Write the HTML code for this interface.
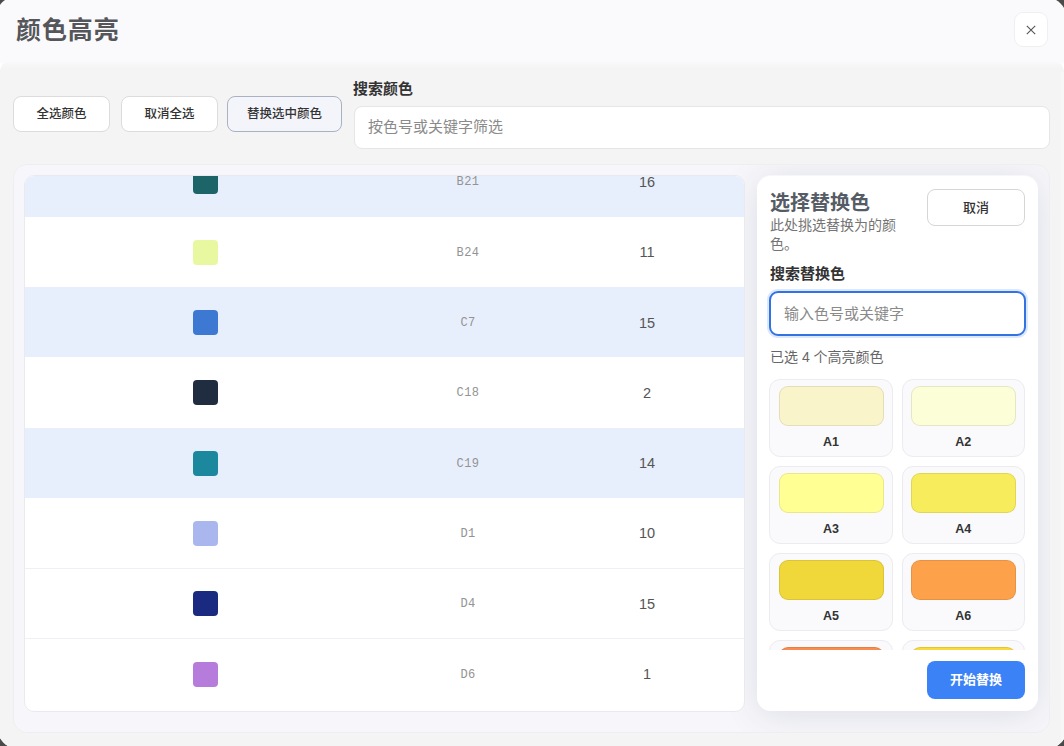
<!DOCTYPE html>
<html lang="zh-CN">
<head>
<meta charset="utf-8">
<title>颜色高亮</title>
<style>
*{box-sizing:border-box;margin:0;padding:0}
html,body{width:1064px;height:746px;overflow:hidden;background:#4a4a4a}
body{font-family:"Liberation Sans","Noto Sans CJK SC",sans-serif;position:relative;color:#333}
.win{position:absolute;left:-3px;top:-3px;width:1070px;height:752px;border-radius:18px 22px 21px 22px;background:#fafafc;overflow:hidden}
.inner{position:absolute;left:3px;top:3px;width:1064px;height:746px}
.title{position:absolute;left:16px;top:11px;font-size:25px;font-weight:700;color:#55565a;line-height:38px;letter-spacing:.9px}
.close{position:absolute;left:1014px;top:12px;width:34px;height:35px;border-radius:9px;background:#fff;border:1px solid #efeff1}
.close svg{position:absolute;left:10.9px;top:12px}
.bw{position:absolute;top:62px;width:12px;height:12px;background:linear-gradient(#fafafc,#fff 3px)}
.body{position:absolute;left:0;top:61px;width:1064px;height:700px;background:linear-gradient(#fafafc,#f7f7f9 3px,#f4f4f4 9px,#f4f4f4);border-radius:10px 10px 0 0}
.rstrip{position:absolute;left:1061px;top:72px;width:3px;height:680px;background:#f7f7f7}
.btn{position:absolute;top:96px;height:36px;border-radius:8px;background:#fff;border:1px solid #dcdcdc;font-size:12.5px;font-weight:500;color:#333;text-align:center;line-height:34px}
.btn.act{background:#f3f5fb;border-color:#a9b1c2}
.lbl{position:absolute;left:353px;top:78px;font-size:15px;font-weight:700;color:#333;line-height:22px}
.search{position:absolute;left:354px;top:106px;width:695.5px;height:42.5px;border-radius:8px;background:#fff;border:1px solid #e6e6e6;font-size:15px;color:#8a8a8a;line-height:40px;padding-left:13px}
.card{position:absolute;left:13px;top:164px;width:1037px;height:569px;border-radius:14px;background:#f7f7fb;border:1px solid #ededf3;overflow:hidden}
.pshadow{position:absolute;left:743px;top:10px;width:281px;height:536px;border-radius:14px;box-shadow:0 4px 36px rgba(20,28,50,.115)}
.table{position:absolute;left:24px;top:175px;width:721px;height:537px;border-radius:10px;background:#fff;border:1px solid #e9e9f0;overflow:hidden}
.row{position:absolute;left:0;width:721px;height:70.3px;box-shadow:0 1px 0 #eff0f6}
.row.sel{background:#e8effc;box-shadow:none}
.sw{position:absolute;left:168px;top:23px;width:25px;height:25px;border-radius:4px}
.code{position:absolute;left:393px;width:100px;top:28px;text-align:center;font-family:"Liberation Mono",monospace;font-size:12px;letter-spacing:.4px;color:#939393;line-height:16px}
.cnt{position:absolute;left:572px;width:100px;top:25.5px;text-align:center;font-size:14.5px;color:#555;line-height:20px}
.pin{position:absolute;left:.5px;top:-.7px;width:281px;height:536px}
.panel{position:absolute;left:756.5px;top:175.7px;width:281.5px;height:535.3px;border-radius:14px;background:#fff}
.ptitle{position:absolute;left:13px;top:14px;font-size:20px;font-weight:700;color:#565c66;line-height:28px}
.psub{position:absolute;left:13px;top:41px;width:140px;font-size:14px;color:#747474;line-height:18.5px}
.cancel{position:absolute;left:170px;top:13.5px;width:98px;height:37px;border-radius:8px;background:#fff;border:1px solid #d6d6d6;font-size:13px;font-weight:500;color:#333;text-align:center;line-height:35px}
.plbl{position:absolute;left:13px;top:88px;font-size:15px;font-weight:700;color:#333;line-height:22px}
.pinput{position:absolute;left:12px;top:116px;width:257px;height:45px;border-radius:9px;background:#fff;border:2px solid #3373df;box-shadow:0 0 0 2px rgba(59,130,246,.18);font-size:15px;color:#8a8a8a;line-height:41px;padding-left:13px}
.pcount{position:absolute;left:13px;top:172px;font-size:14px;color:#666;line-height:20px}
.grid{position:absolute;left:12px;top:204px;width:257px;height:271px;overflow:hidden}
.sc{position:absolute;width:124px;height:78px;border-radius:11px;background:#fafafc;border:1px solid #ececf0}
.sc i{position:absolute;left:9px;top:6px;width:105px;height:40px;border-radius:9px;border:1px solid rgba(0,0,0,.09)}
.sc.r i{left:8px}
.sc b{position:absolute;left:0;width:100%;top:52.5px;text-align:center;font-size:12.5px;font-weight:700;color:#333;line-height:18px}
.go{position:absolute;left:170px;top:486px;width:98px;height:37.5px;border-radius:8px;background:#3b82f6;font-size:13px;font-weight:700;color:#fff;text-align:center;line-height:37px}
</style>
</head>
<body>
<div class="win"><div class="inner">
  <div class="title">颜色高亮</div>
  <div class="close"><svg width="10" height="10" viewBox="0 0 10 10"><path d="M.8 .8L9.2 9.2M9.2 .8L.8 9.2" stroke="#555" stroke-width="1.1" fill="none"/></svg></div>
  <div class="bw" style="left:0"></div><div class="bw" style="left:1052px"></div><div class="body"></div><div class="rstrip"></div>
  <div class="btn" style="left:13px;width:97px">全选颜色</div>
  <div class="btn" style="left:121px;width:97px">取消全选</div>
  <div class="btn act" style="left:227px;width:115px">替换选中颜色</div>
  <div class="lbl">搜索颜色</div>
  <div class="search">按色号或关键字筛选</div>
  <div class="card"><div class="pshadow"></div></div>
  <div class="table">
    <div class="row sel" style="top:-29.6px"><span class="sw" style="background:#1d6468"></span><span class="code">B21</span><span class="cnt">16</span></div>
    <div class="row" style="top:40.7px"><span class="sw" style="background:#e8f8a0"></span><span class="code">B24</span><span class="cnt">11</span></div>
    <div class="row sel" style="top:111.0px"><span class="sw" style="background:#3d78d2"></span><span class="code">C7</span><span class="cnt">15</span></div>
    <div class="row" style="top:181.3px"><span class="sw" style="background:#202d40"></span><span class="code">C18</span><span class="cnt">2</span></div>
    <div class="row sel" style="top:251.6px"><span class="sw" style="background:#1b889e"></span><span class="code">C19</span><span class="cnt">14</span></div>
    <div class="row" style="top:321.9px"><span class="sw" style="background:#aab6ee"></span><span class="code">D1</span><span class="cnt">10</span></div>
    <div class="row" style="top:392.2px"><span class="sw" style="background:#1a2a80"></span><span class="code">D4</span><span class="cnt">15</span></div>
    <div class="row" style="top:462.5px;box-shadow:none"><span class="sw" style="background:#b57cdc"></span><span class="code">D6</span><span class="cnt">1</span></div>
  </div>
  <div class="panel"><div class="pin">
    <div class="ptitle">选择替换色</div>
    <div class="psub">此处挑选替换为的颜色。</div>
    <div class="cancel">取消</div>
    <div class="plbl">搜索替换色</div>
    <div class="pinput">输入色号或关键字</div>
    <div class="pcount">已选 4 个高亮颜色</div>
    <div class="grid">
      <div class="sc" style="left:0;top:0"><i style="background:#faf4cb"></i><b>A1</b></div>
      <div class="sc r" style="left:132.5px;width:123.5px;top:0"><i style="background:#fcfed8"></i><b>A2</b></div>
      <div class="sc" style="left:0;top:87.1px"><i style="background:#ffff94"></i><b>A3</b></div>
      <div class="sc r" style="left:132.5px;width:123.5px;top:87.1px"><i style="background:#f7ec5c"></i><b>A4</b></div>
      <div class="sc" style="left:0;top:174.2px"><i style="background:#f0d73a"></i><b>A5</b></div>
      <div class="sc r" style="left:132.5px;width:123.5px;top:174.2px"><i style="background:#fda14b"></i><b>A6</b></div>
      <div class="sc" style="left:0;top:261.29999999999995px"><i style="background:#fa8c4f"></i><b>A7</b></div>
      <div class="sc r" style="left:132.5px;width:123.5px;top:261.29999999999995px"><i style="background:#f9d93c"></i><b>A8</b></div>
    </div>
    <div class="go">开始替换</div>
  </div></div>
</div></div>
</body>
</html>
